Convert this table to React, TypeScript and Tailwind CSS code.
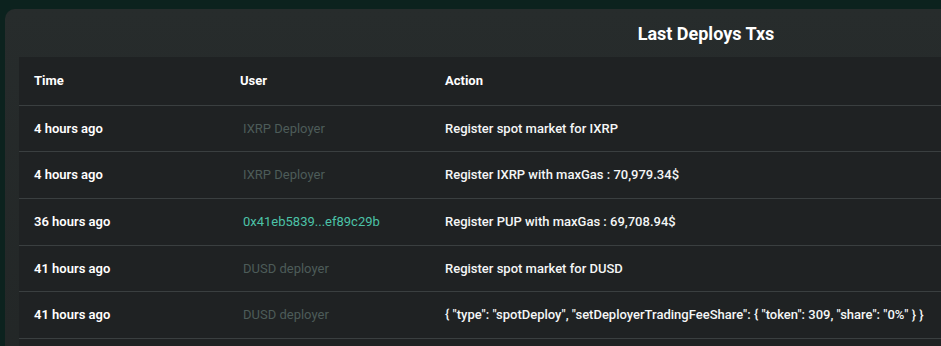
const rows = [
  { time: '4 hours ago', user: 'IXRP Deployer', address: false, action: 'Register spot market for IXRP' },
  { time: '4 hours ago', user: 'IXRP Deployer', address: false, action: 'Register IXRP with maxGas : 70,979.34$' },
  { time: '36 hours ago', user: '0x41eb5839...ef89c29b', address: true, action: 'Register PUP with maxGas : 69,708.94$' },
  { time: '41 hours ago', user: 'DUSD deployer', address: false, action: 'Register spot market for DUSD' },
  {
    time: '41 hours ago',
    user: 'DUSD deployer',
    address: false,
    action: '{ "type": "spotDeploy", "setDeployerTradingFeeShare": { "token": 309, "share": "0%" } }',
  },
];

const App = () => {
  return (
    <div
      className="w-[941px] h-[346px] overflow-hidden bg-[#0c221e] pt-[9px] pl-[5px]"
      style={{ fontFamily: 'Roboto, "Liberation Sans", sans-serif' }}
    >
      <div className="w-[1402px] rounded-[10px] bg-gradient-to-b from-[#272c2c] to-[#222626] px-[14px] pb-4">
        <h2 className="h-[48px] flex items-center justify-center text-[18px] font-bold text-white">
          Last Deploys Txs
        </h2>
        <table className="w-full table-fixed border-collapse bg-[#1f2223] text-[13px] text-white">
          <thead>
            <tr className="h-[48px] border-b border-[#3a3f40]">
              <th className="w-[206px] pl-[15px] text-left font-bold">Time</th>
              <th className="w-[205px] pl-[15px] text-left font-bold">User</th>
              <th className="pl-[15px] text-left font-bold">Action</th>
            </tr>
          </thead>
          <tbody>
            {rows.map((row, index) => (
              <tr key={index} className="h-[46.7px] border-b border-[#3a3f40]">
                <td className="pl-[15px] font-semibold">{row.time}</td>
                <td className={`pl-[18px] ${row.address ? 'text-[#4cc2a8]' : 'text-[#4d5c59]'}`}>
                  {row.user}
                </td>
                <td className="pl-[15px] font-medium text-[#f4f6f6] whitespace-nowrap">{row.action}</td>
              </tr>
            ))}
            <tr className="h-[46.7px]">
              <td colSpan={3}></td>
            </tr>
          </tbody>
        </table>
      </div>
    </div>
  );
};

export default App;
